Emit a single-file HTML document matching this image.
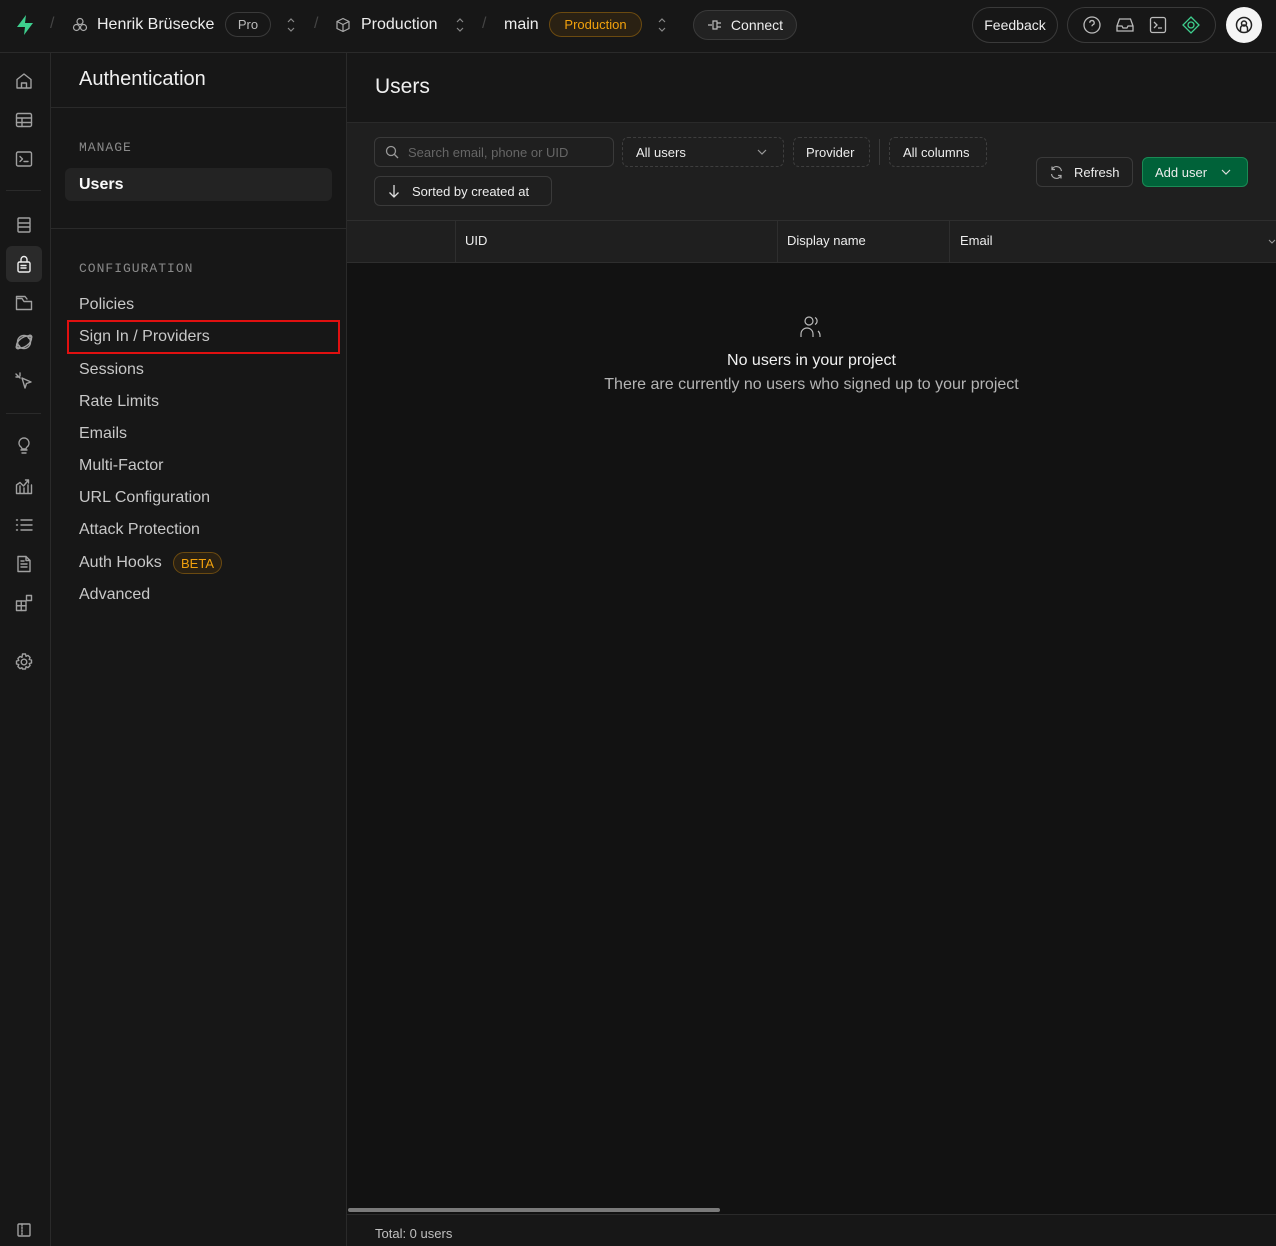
<!DOCTYPE html>
<html><head><meta charset="utf-8"><style>
*{box-sizing:border-box;margin:0;padding:0}
body{width:1276px;height:1246px;background:#171717;font-family:"Liberation Sans",sans-serif;color:#ededed;position:relative;overflow:hidden;font-size:14px}
.a{position:absolute}
.ic{position:absolute;left:14px;width:20px;height:20px;fill:none;stroke:#a0a0a0;stroke-width:1.4;stroke-linecap:round;stroke-linejoin:round}
.nav{position:absolute;left:79px;font-size:16px;color:#c8c8c8}
.btn{position:absolute;border:1px solid #3a3a3a;border-radius:6px;font-size:13px;color:#ededed;display:flex;align-items:center;background:#1f1f1f}
.dash{border:1px dashed #3e3e3e;background:transparent}
.pill{border:1px solid #3a3a3a;border-radius:16px;position:absolute;display:flex;align-items:center;justify-content:center}
.chev{position:absolute;top:16px}
</style></head><body>
<!-- top bar -->
<div class="a" style="left:0;top:52px;width:1276px;height:1px;background:#2a2a2a"></div>
<svg class="a" style="left:14px;top:14px" width="22" height="22" viewBox="0 0 22 22"><path d="M12 1 L3 13 H11 L10 21 L19 9 H11 Z" fill="#3ecf8e"/></svg>
<div class="a" style="left:50px;top:15px;color:#444;font-size:16px">/</div>
<svg class="a" style="left:72px;top:17px" width="16" height="16" viewBox="0 0 16 16" fill="none" stroke="#aaa" stroke-width="1.2"><circle cx="8" cy="4.5" r="3"/><circle cx="4.5" cy="10.5" r="3"/><circle cx="11.5" cy="10.5" r="3"/></svg>
<div class="a" style="left:97px;top:16px;font-size:16px">Henrik Brüsecke</div>
<div class="pill" style="left:225px;top:12px;width:46px;height:25px;font-size:13px;color:#bbb">Pro</div>
<svg class="chev" style="left:286px" width="10" height="18" viewBox="0 0 10 18" fill="none" stroke="#888" stroke-width="1.2"><path d="M2 6l3-3 3 3M2 12l3 3 3-3"/></svg>
<div class="a" style="left:314px;top:15px;color:#444;font-size:16px">/</div>
<svg class="a" style="left:335px;top:17px" width="16" height="16" viewBox="0 0 16 16" fill="none" stroke="#aaa" stroke-width="1.2"><path d="M8 1.5 L14 4.5 V11.5 L8 14.5 L2 11.5 V4.5 Z M2 4.5 L8 7.5 L14 4.5 M8 7.5 V14.5"/></svg>
<div class="a" style="left:361px;top:16px;font-size:16px">Production</div>
<svg class="chev" style="left:455px" width="10" height="18" viewBox="0 0 10 18" fill="none" stroke="#888" stroke-width="1.2"><path d="M2 6l3-3 3 3M2 12l3 3 3-3"/></svg>
<div class="a" style="left:482px;top:15px;color:#444;font-size:16px">/</div>
<div class="a" style="left:504px;top:16px;font-size:16px">main</div>
<div class="pill" style="left:549px;top:12px;width:93px;height:25px;font-size:13px;color:#f1a10d;border-color:#6b4a10;background:#2a2113">Production</div>
<svg class="chev" style="left:657px" width="10" height="18" viewBox="0 0 10 18" fill="none" stroke="#888" stroke-width="1.2"><path d="M2 6l3-3 3 3M2 12l3 3 3-3"/></svg>
<div class="pill" style="left:693px;top:10px;width:104px;height:30px;font-size:14px;background:#222;border-color:#3a3a3a">
<svg width="16" height="12" viewBox="0 0 16 12" fill="none" stroke="#bbb" stroke-width="1.2" style="margin-right:8px"><path d="M1 6H5 M6 2H10V10H6Z M10 4H14 M10 8H14"/></svg>Connect</div>
<div class="pill" style="left:972px;top:7px;width:86px;height:36px;border-radius:18px;font-size:14px">Feedback</div>
<div class="pill" style="left:1067px;top:7px;width:149px;height:36px;border-radius:18px;justify-content:space-around;padding:0 8px">
<svg width="20" height="20" viewBox="0 0 20 20" fill="none" stroke="#bbb" stroke-width="1.3"><circle cx="10" cy="10" r="8"/><path d="M7.8 7.8a2.2 2.2 0 1 1 3 2c-.6.3-.8.7-.8 1.4M10 14v.1"/></svg>
<svg width="20" height="20" viewBox="0 0 20 20" fill="none" stroke="#bbb" stroke-width="1.3"><path d="M2 11 L4.5 4H15.5L18 11V16H2Z M2 11H7L8 13H12L13 11H18"/></svg>
<svg width="20" height="20" viewBox="0 0 20 20" fill="none" stroke="#bbb" stroke-width="1.3"><rect x="2.5" y="2.5" width="15" height="15" rx="2"/><path d="M6 7l3 3-3 3M10 13h4"/></svg>
<svg width="20" height="20" viewBox="0 0 20 20" fill="none" stroke="#3ecf8e" stroke-width="1.3"><path d="M10 2L18 10L10 18L2 10Z"/><circle cx="10" cy="10" r="3"/></svg>
</div>
<div class="a" style="left:1226px;top:7px;width:36px;height:36px;border-radius:50%;background:#f5f5f5"></div>
<svg class="a" style="left:1234px;top:15px" width="20" height="20" viewBox="0 0 20 20" fill="none" stroke="#222" stroke-width="1.5"><circle cx="10" cy="10" r="7.5"/><circle cx="10" cy="8.5" r="2.5"/><path d="M6.5 16V13.5a3.5 3.5 0 0 1 7 0V16"/></svg>

<!-- left icon rail -->
<div class="a" style="left:50px;top:53px;width:1px;height:1193px;background:#2a2a2a"></div>
<div class="a" style="left:6px;top:190px;width:35px;height:1px;background:#2a2a2a"></div>
<div class="a" style="left:6px;top:413px;width:35px;height:1px;background:#2a2a2a"></div>
<div class="a" style="left:6px;top:246px;width:36px;height:36px;border-radius:6px;background:#2a2a2a"></div>
<svg class="ic" style="top:71px" viewBox="0 0 20 20"><path d="M3 8.5L10 3l7 5.5V17H3Z M7.5 17v-5h5v5"/></svg>
<svg class="ic" style="top:110px" viewBox="0 0 20 20"><rect x="2.5" y="3.5" width="15" height="13" rx="1.5"/><path d="M2.5 8h15M2.5 12.5h15M8 8v8.5"/></svg>
<svg class="ic" style="top:149px" viewBox="0 0 20 20"><rect x="2.5" y="3" width="15" height="14" rx="1.5"/><path d="M6 7.5l2.5 2.5L6 12.5M10 12.5h4"/></svg>
<svg class="ic" style="top:215px" viewBox="0 0 20 20"><rect x="4" y="3" width="12" height="5" rx="1"/><rect x="4" y="12" width="12" height="5" rx="1"/><path d="M4 8v4M16 8v4"/></svg>
<svg class="ic" style="top:254px;stroke:#eee" viewBox="0 0 20 20"><rect x="4" y="8" width="12" height="10" rx="1.5"/><path d="M7 8V5.5a3 3 0 0 1 6 0V8M7 11.5h5M7 14h5"/></svg>
<svg class="ic" style="top:293px" viewBox="0 0 20 20"><path d="M2.5 5.5V16.5H17.5V8.5H10L8 5.5Z M2.5 8.5V3.5H11L13 6"/></svg>
<svg class="ic" style="top:332px" viewBox="0 0 20 20"><circle cx="10" cy="10" r="6.5"/><ellipse cx="10" cy="10" rx="8.5" ry="4.5" transform="rotate(-35 10 10)"/><circle cx="16" cy="5" r="1.8"/><circle cx="4" cy="15" r="1.8"/></svg>
<svg class="ic" style="top:371px" viewBox="0 0 20 20"><path d="M8 7L17 11L12.5 12.5L11 17Z M2 3l4 4M6 2v3M2 6h3"/></svg>
<svg class="ic" style="top:436px" viewBox="0 0 20 20"><path d="M7 14h6M8 17h4M10 2a5 5 0 0 0-3 9c.5.4 1 1 1 2h4c0-1 .5-1.6 1-2a5 5 0 0 0-3-9Z"/></svg>
<svg class="ic" style="top:476px" viewBox="0 0 20 20"><path d="M2.5 17.5V9L6 6.5 9.5 10 14 4.5M11.5 4h3v3M2.5 17.5h15V9M6 17.5V10M10 17.5V12M14 17.5V9"/></svg>
<svg class="ic" style="top:515px" viewBox="0 0 20 20"><path d="M7 5h11M7 10h11M7 15h11M2.5 5h1M2.5 10h1M2.5 15h1"/></svg>
<svg class="ic" style="top:554px" viewBox="0 0 20 20"><path d="M4 2.5h8l4 4V17.5H4Z M12 2.5V6.5h4M7 10h6M7 13h6M7 7h3"/></svg>
<svg class="ic" style="top:593px" viewBox="0 0 20 20"><rect x="2.5" y="8" width="9.5" height="9.5"/><path d="M2.5 12.75h9.5M7.25 8v9.5"/><rect x="12.5" y="2.5" width="5" height="5"/></svg>
<svg class="ic" style="top:652px" viewBox="0 0 20 20"><circle cx="10" cy="10" r="2.8"/><path d="M8.5 2h3l.5 2.3 2-.9 2.1 2.1-.9 2 2.3.5v3l-2.3.5.9 2-2.1 2.1-2-.9-.5 2.3h-3L8 15.7l-2 .9-2.1-2.1.9-2L2.5 12V9l2.3-.5-.9-2L6 4.4l2 .9Z"/></svg>
<svg class="ic" style="top:1222px;width:16px;height:16px;left:16px" viewBox="0 0 16 16"><rect x="2" y="2" width="12" height="12" rx="1"/><path d="M6 2v12" stroke-dasharray="1.5 1.5"/></svg>

<!-- auth sidebar -->
<div class="a" style="left:346px;top:53px;width:1px;height:1193px;background:#2a2a2a"></div>
<div class="a" style="left:79px;top:68px;font-size:20px;color:#f0f0f0">Authentication</div>
<div class="a" style="left:51px;top:107px;width:295px;height:1px;background:#2a2a2a"></div>
<div class="a" style="left:79px;top:140px;font-family:'Liberation Mono',monospace;font-size:13px;color:#8a8a8a;letter-spacing:1px">MANAGE</div>
<div class="a" style="left:65px;top:168px;width:267px;height:33px;border-radius:6px;background:#232323"></div>
<div class="nav" style="top:176px;color:#fafafa;font-weight:bold">Users</div>
<div class="a" style="left:51px;top:228px;width:295px;height:1px;background:#2a2a2a"></div>
<div class="a" style="left:79px;top:261px;font-family:'Liberation Mono',monospace;font-size:13px;color:#8a8a8a;letter-spacing:1px">CONFIGURATION</div>
<div class="nav" style="top:296px">Policies</div>
<div class="a" style="left:67px;top:320px;width:273px;height:34px;border:2px solid #e01010"></div>
<div class="nav" style="top:328px">Sign In / Providers</div>
<div class="nav" style="top:361px">Sessions</div>
<div class="nav" style="top:393px">Rate Limits</div>
<div class="nav" style="top:425px">Emails</div>
<div class="nav" style="top:457px">Multi-Factor</div>
<div class="nav" style="top:489px">URL Configuration</div>
<div class="nav" style="top:521px">Attack Protection</div>
<div class="nav" style="top:554px">Auth Hooks</div>
<div class="pill" style="left:173px;top:552px;width:49px;height:22px;font-size:13px;color:#f1a10d;border-color:#6b4a10;background:#2a2113;border-radius:11px">BETA</div>
<div class="nav" style="top:586px">Advanced</div>

<!-- main -->
<div class="a" style="left:375px;top:75px;font-size:21px;color:#f0f0f0">Users</div>
<div class="a" style="left:347px;top:122px;width:929px;height:141px;background:#1f1f1f;border-top:1px solid #2a2a2a"></div>
<div class="btn" style="left:374px;top:137px;width:240px;height:30px;padding-left:10px;color:#666">
<svg width="14" height="14" viewBox="0 0 14 14" fill="none" stroke="#999" stroke-width="1.3" style="margin-right:9px"><circle cx="6" cy="6" r="4.5"/><path d="M9.5 9.5L13 13"/></svg>Search email, phone or UID</div>
<div class="btn dash" style="left:622px;top:137px;width:162px;height:30px;padding-left:13px">All users<svg style="position:absolute;right:16px;top:11px" width="10" height="6" viewBox="0 0 10 6" fill="none" stroke="#999" stroke-width="1.2"><path d="M1 1l4 4 4-4"/></svg></div>
<div class="btn dash" style="left:793px;top:137px;width:77px;height:30px;padding-left:12px">Provider</div>
<div class="a" style="left:879px;top:139px;width:1px;height:26px;background:#3a3a3a"></div>
<div class="btn dash" style="left:889px;top:137px;width:98px;height:30px;padding-left:13px">All columns</div>
<div class="btn" style="left:374px;top:176px;width:178px;height:30px;padding-left:13px">
<svg width="12" height="14" viewBox="0 0 12 14" fill="none" stroke="#ddd" stroke-width="1.3" style="margin-right:12px"><path d="M6 1v12M1.5 8.5L6 13l4.5-4.5"/></svg>Sorted by created at</div>
<div class="btn" style="left:1036px;top:157px;width:97px;height:30px;padding-left:12px">
<svg width="15" height="15" viewBox="0 0 15 15" fill="none" stroke="#aaa" stroke-width="1.2" style="margin-right:10px"><path d="M12.5 6A5 5 0 0 0 3 4.5M2.5 9A5 5 0 0 0 12 10.5M3 1.5v3h3M12 13.5v-3H9"/></svg>Refresh</div>
<div class="btn" style="left:1142px;top:157px;width:106px;height:30px;padding-left:12px;background:#006239;border-color:#1a8a55">Add user<svg style="position:absolute;right:16px;top:11px" width="10" height="6" viewBox="0 0 10 6" fill="none" stroke="#ddd" stroke-width="1.2"><path d="M1 1l4 4 4-4"/></svg></div>
<div class="a" style="left:347px;top:220px;width:929px;height:1px;background:#2e2e2e"></div>
<div class="a" style="left:455px;top:221px;width:1px;height:41px;background:#2e2e2e"></div>
<div class="a" style="left:777px;top:221px;width:1px;height:41px;background:#2e2e2e"></div>
<div class="a" style="left:949px;top:221px;width:1px;height:41px;background:#2e2e2e"></div>
<div class="a" style="left:465px;top:233px;font-size:13px">UID</div>
<div class="a" style="left:787px;top:233px;font-size:13px">Display name</div>
<div class="a" style="left:960px;top:233px;font-size:13px">Email</div>
<svg class="a" style="left:1268px;top:239px" width="8" height="5" viewBox="0 0 8 5" fill="none" stroke="#999" stroke-width="1.1"><path d="M1 1l3 3 3-3"/></svg>
<div class="a" style="left:347px;top:262px;width:929px;height:952px;background:#121212;border-top:1px solid #2e2e2e"></div>
<svg class="a" style="left:799px;top:315px" width="26" height="24" viewBox="0 0 26 24" fill="none" stroke="#bbb" stroke-width="1.2"><circle cx="10" cy="6" r="4"/><path d="M2 22v-3a6 6 0 0 1 12 0v3M16 2.5a4 4 0 0 1 0 7M19 16a6 6 0 0 1 2 4v2"/></svg>
<div class="a" style="left:347px;top:352px;width:929px;text-align:center;font-size:16px;color:#f0f0f0">No users in your project</div>
<div class="a" style="left:347px;top:376px;width:929px;text-align:center;font-size:16px;color:#b4b4b4">There are currently no users who signed up to your project</div>
<div class="a" style="left:348px;top:1208px;width:372px;height:4px;border-radius:2px;background:#7a7a7a"></div>
<div class="a" style="left:347px;top:1214px;width:929px;height:1px;background:#2a2a2a"></div>
<div class="a" style="left:375px;top:1226px;font-size:13px;color:#c0c0c0">Total: 0 users</div>
</body></html>
